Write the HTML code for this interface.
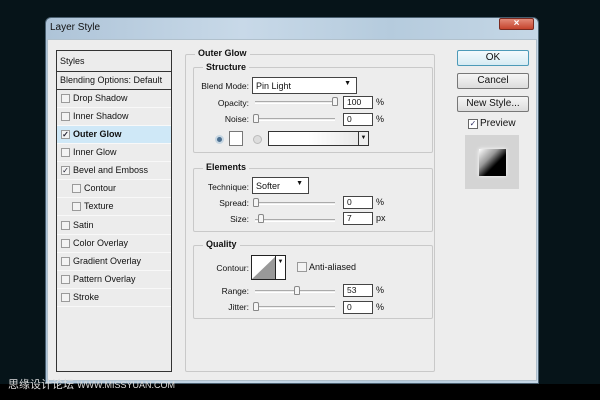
<!DOCTYPE html>
<html><head><style>
*{margin:0;padding:0;box-sizing:border-box}
body{width:600px;height:400px;overflow:hidden;background:#061419;font-family:"Liberation Sans",Tahoma,sans-serif;font-size:9px;color:#111;position:relative}
.a{position:absolute}
.dlg{left:45px;top:17px;width:494px;height:367px;background:linear-gradient(90deg,#aec4d8,#c8d9e8 40%,#b5cbdd 70%,#c5d7e6);border:1px solid #4a6070;border-radius:6px 6px 0 0}
.body{left:47px;top:39px;width:490px;height:342px;background:#ededed;border:1px solid #b0c0cc}
.lp{left:56px;top:50px;width:116px;height:322px;border:1px solid #333;background:#ececec}
.row{position:absolute;left:0;width:114px;height:18px;border-bottom:1px solid #f8f8f8;line-height:17px;padding-left:16px}
.cb{position:absolute;width:9px;height:9px;border:1px solid #9a9a9a;background:#f3f3f3;top:4px;font-size:8px;line-height:7px;text-align:center;color:#223}
.grp{position:absolute;border:1px solid #c9c9c9;border-radius:2px}
.lg{position:absolute;background:#ededed;font-weight:bold;padding:0 3px;font-size:9px}
.lbl{position:absolute;text-align:right;width:70px;font-size:8.5px}
.inp{position:absolute;width:30px;height:13px;background:#fff;border:1px solid #444;font-size:8.5px;line-height:11px;padding-left:3px}
.tr{position:absolute;height:3px;border-top:1px solid #aaa;border-bottom:1px solid #fff;width:80px}
.th{position:absolute;width:6px;height:9px;border:1px solid #888;border-radius:2px 2px 1px 1px;background:#f5f5f5}
.btn{position:absolute;left:457px;width:72px;height:16px;border:1px solid #777;border-radius:2px;background:linear-gradient(#f5f5f5,#dcdcdc);text-align:center;line-height:14px;font-size:10px}
</style></head><body>
<div class="a dlg"></div>
<div class="a" style="left:50px;top:22px;font-size:10px;color:#111">Layer Style</div>
<div class="a" style="left:499px;top:18px;width:35px;height:12px;background:linear-gradient(#e28a78,#c4432d);border:1px solid #7a2a20;border-radius:2px;color:#fff;font-size:10px;text-align:center;line-height:10px;font-weight:bold">×</div>
<div class="a body"></div>
<div class="a lp">
<div class="row" style="top:0;height:21px;padding-left:3px;border-bottom:1px solid #333;line-height:20px">Styles</div>
<div class="row" style="top:21px;height:18px;padding-left:3px;border-bottom:1px solid #333">Blending Options: Default</div>
<div class="row" style="top:39px"><span class="cb" style="left:4px"></span>Drop Shadow</div>
<div class="row" style="top:57px"><span class="cb" style="left:4px"></span>Inner Shadow</div>
<div class="row" style="top:75px;background:#cfe8f7;font-weight:bold"><span class="cb" style="left:4px">✓</span>Outer Glow</div>
<div class="row" style="top:93px"><span class="cb" style="left:4px"></span>Inner Glow</div>
<div class="row" style="top:111px"><span class="cb" style="left:4px">✓</span>Bevel and Emboss</div>
<div class="row" style="top:129px;padding-left:27px"><span class="cb" style="left:15px"></span>Contour</div>
<div class="row" style="top:147px;padding-left:27px"><span class="cb" style="left:15px"></span>Texture</div>
<div class="row" style="top:166px"><span class="cb" style="left:4px"></span>Satin</div>
<div class="row" style="top:184px"><span class="cb" style="left:4px"></span>Color Overlay</div>
<div class="row" style="top:202px"><span class="cb" style="left:4px"></span>Gradient Overlay</div>
<div class="row" style="top:220px"><span class="cb" style="left:4px"></span>Pattern Overlay</div>
<div class="row" style="top:238px"><span class="cb" style="left:4px"></span>Stroke</div>
</div>
<!-- middle -->
<div class="grp" style="left:185px;top:54px;width:250px;height:318px"></div>
<div class="lg" style="left:195px;top:48px">Outer Glow</div>
<div class="grp" style="left:193px;top:67px;width:240px;height:86px"></div>
<div class="lg" style="left:203px;top:62px">Structure</div>
<div class="lbl" style="left:179px;top:81px">Blend Mode:</div>
<div class="a" style="left:252px;top:77px;width:105px;height:17px;background:#fff;border:1px solid #444;font-size:9px;padding:3px 3px">Pin Light<span style="position:absolute;right:5px;top:2px;font-size:7px">▼</span></div>
<div class="lbl" style="left:179px;top:98px">Opacity:</div>
<div class="tr" style="left:255px;top:101px"></div><div class="th" style="left:332px;top:97px"></div>
<div class="inp" style="left:343px;top:96px">100</div><div class="a" style="left:376px;top:97px">%</div>
<div class="lbl" style="left:179px;top:114px">Noise:</div>
<div class="tr" style="left:255px;top:118px"></div><div class="th" style="left:253px;top:114px"></div>
<div class="inp" style="left:343px;top:113px">0</div><div class="a" style="left:376px;top:114px">%</div>
<div class="a" style="left:215px;top:135px;width:9px;height:9px;border-radius:50%;background:#4b6f90;border:2px solid #c6d6e2"></div>
<div class="a" style="left:229px;top:131px;width:14px;height:15px;background:#fff;border:1px solid #777"></div>
<div class="a" style="left:253px;top:135px;width:9px;height:9px;border-radius:50%;background:#ddd;border:1px solid #bbb"></div>
<div class="a" style="left:268px;top:131px;width:101px;height:15px;background:linear-gradient(90deg,#fff,#fff 40%,#e4e4e4);border:1px solid #333"><span style="position:absolute;right:0;top:0;width:10px;height:13px;border-left:1px solid #333;font-size:6px;text-align:center;line-height:13px;background:#eee">▼</span></div>
<div class="grp" style="left:193px;top:168px;width:240px;height:64px"></div>
<div class="lg" style="left:203px;top:162px">Elements</div>
<div class="lbl" style="left:179px;top:182px">Technique:</div>
<div class="a" style="left:252px;top:177px;width:57px;height:17px;background:#fff;border:1px solid #444;padding:3px 3px">Softer<span style="position:absolute;right:5px;top:2px;font-size:7px">▼</span></div>
<div class="lbl" style="left:179px;top:198px">Spread:</div>
<div class="tr" style="left:255px;top:202px"></div><div class="th" style="left:253px;top:198px"></div>
<div class="inp" style="left:343px;top:196px">0</div><div class="a" style="left:376px;top:197px">%</div>
<div class="lbl" style="left:179px;top:214px">Size:</div>
<div class="tr" style="left:255px;top:219px"></div><div class="th" style="left:258px;top:214px"></div>
<div class="inp" style="left:343px;top:212px">7</div><div class="a" style="left:376px;top:213px">px</div>
<div class="grp" style="left:193px;top:245px;width:240px;height:74px"></div>
<div class="lg" style="left:203px;top:239px">Quality</div>
<div class="lbl" style="left:179px;top:263px">Contour:</div>
<div class="a" style="left:251px;top:255px;width:35px;height:25px;border:1px solid #222;background:#fff;overflow:hidden"><svg width="24" height="23" style="position:absolute;left:0;top:0"><polygon points="0,23 24,0 24,23" fill="#999"/></svg><span style="position:absolute;right:0;top:0;width:10px;height:23px;border-left:1px solid #222;font-size:6px;text-align:center;line-height:12px">▼</span></div>
<div class="a" style="left:297px;top:262px;width:10px;height:10px;border:1px solid #999;background:#f3f3f3"></div>
<div class="a" style="left:309px;top:262px">Anti-aliased</div>
<div class="lbl" style="left:179px;top:286px">Range:</div>
<div class="tr" style="left:255px;top:290px"></div><div class="th" style="left:294px;top:286px"></div>
<div class="inp" style="left:343px;top:284px">53</div><div class="a" style="left:376px;top:285px">%</div>
<div class="lbl" style="left:179px;top:302px">Jitter:</div>
<div class="tr" style="left:255px;top:306px"></div><div class="th" style="left:253px;top:302px"></div>
<div class="inp" style="left:343px;top:301px">0</div><div class="a" style="left:376px;top:302px">%</div>
<!-- right -->
<div class="btn" style="top:50px;border-color:#4d9ab8;background:linear-gradient(#f4fafd,#d6ebf3)">OK</div>
<div class="btn" style="top:73px">Cancel</div>
<div class="btn" style="top:96px">New Style...</div>
<div class="a" style="left:468px;top:119px;width:10px;height:10px;border:1px solid #666;background:#fff;font-size:8px;line-height:8px;text-align:center;color:#336">✓</div>
<div class="a" style="left:480px;top:118px;font-size:10px">Preview</div>
<div class="a" style="left:465px;top:135px;width:54px;height:54px;background:#d4d4d4"></div>
<div class="a" style="left:479px;top:149px;width:27px;height:27px;background:linear-gradient(135deg,#fff,#999 35%,#000 60%);box-shadow:0 0 4px #fff"></div>
<div class="a" style="left:0;top:384px;width:600px;height:16px;background:#000"></div>
<div class="a" style="left:8px;top:376px;font-size:11px;color:#ddd;font-family:'Liberation Sans','Noto Sans CJK SC',sans-serif">思缘设计论坛 <span style="font-size:9px">WWW.MISSYUAN.COM</span></div>
</body></html>
